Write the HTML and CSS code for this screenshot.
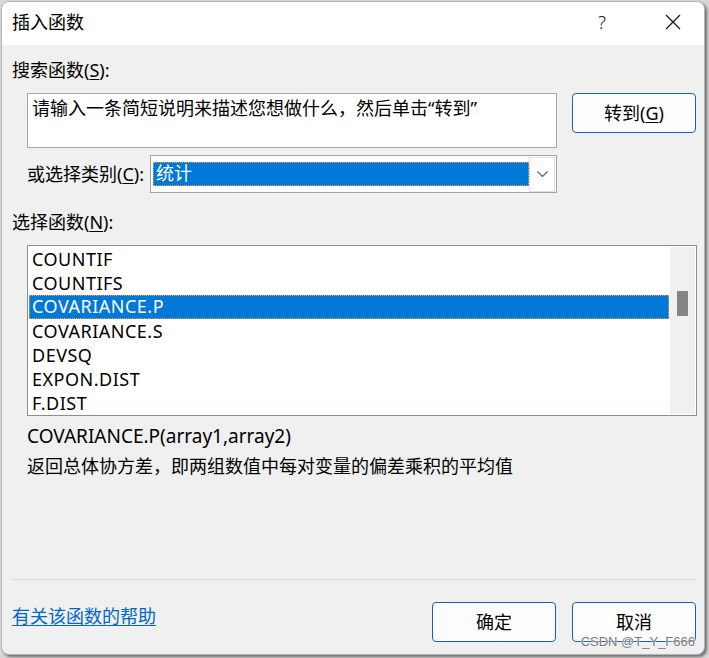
FILE: index.html
```html
<!DOCTYPE html>
<html lang="zh-CN">
<head>
<meta charset="utf-8">
<title>插入函数</title>
<link rel="stylesheet" href="styles.css">
</head>
<body>
<div class="window">
  <div class="titlebar">
    <span class="title">插入函数</span>
    <span class="tb-btn help">?</span>
    <span class="tb-btn close"><svg width="16" height="16" viewBox="0 0 16 16"><path d="M1 1 L15 15 M15 1 L1 15" stroke="#1a1a1a" stroke-width="1.3" fill="none"/></svg></span>
  </div>
  <div class="content">
    <div class="label l-search">搜索函数(<u>S</u>):</div>
    <div class="search-row">
      <div class="search-box">请输入一条简短说明来描述您想做什么，然后单击“转到”</div>
      <button class="btn">转到(<u>G</u>)</button>
    </div>
    <div class="cat-row">
      <span class="cat-label">或选择类别(<u>C</u>):</span>
      <div class="combo">
        <span class="combo-value">统计</span>
        <span class="combo-arrow"><svg width="11" height="6" viewBox="0 0 11 6"><polyline points="0.5,0.5 5.5,5.5 10.5,0.5" stroke="#5a5a5a" stroke-width="1.1" fill="none"/></svg></span>
      </div>
    </div>
    <div class="label l-func">选择函数(<u>N</u>):</div>
    <div class="listbox">
      <ul class="items">
        <li>COUNTIF</li>
        <li>COUNTIFS</li>
        <li class="sel">COVARIANCE.P</li>
        <li>COVARIANCE.S</li>
        <li>DEVSQ</li>
        <li>EXPON.DIST</li>
        <li>F.DIST</li>
      </ul>
      <div class="scrollbar"><div class="thumb"></div></div>
    </div>
    <div class="signature">COVARIANCE.P(array1,array2)</div>
    <div class="desc">返回总体协方差，即两组数值中每对变量的偏差乘积的平均值</div>
    <div class="separator"></div>
    <div class="footer">
      <a class="help-link" href="#">有关该函数的帮助</a>
      <div class="footer-btns">
        <button class="btn">确定</button>
        <button class="btn">取消</button>
      </div>
    </div>
  </div>
  <div class="watermark">CSDN @T_Y_F666</div>
</div>
</body>
</html>
```

FILE: styles.css
```css
html, body {
  margin: 0;
  padding: 0;
}
body {
  background: #d9d9d9;
  font-family: "Noto Sans", "Noto Sans CJK SC", sans-serif;
  font-size: 18px;
  color: #000;
  width: 709px;
  height: 658px;
  overflow: hidden;
}
.window {
  position: relative;
  margin: 1px 0 0 1px;
  width: 702px;
  height: 652px;
  border: 1px solid #b5b5b5;
  border-radius: 8px;
  background: #f0f0f0;
  box-shadow: 2px 2px 3px rgba(0, 0, 0, 0.5);
  overflow: hidden;
}
.titlebar {
  height: 43px;
  box-sizing: border-box;
  padding-bottom: 3px;
  background: #fff;
  display: flex;
  align-items: center;
}
.title {
  flex: 1;
  padding-left: 10px;
  line-height: 24px;
}
.tb-btn {
  width: 62px;
  height: 24px;
  display: flex;
  align-items: center;
  justify-content: center;
  color: #1a1a1a;
}
.help {
  margin-right: 9px;
  font-weight: 300;
  font-size: 19px;
}
.content {
  padding-left: 10px;
}
.label {
  line-height: 24px;
}
u {
  text-decoration-thickness: 1px;
  text-underline-offset: 2px;
}
.l-search {
  margin-top: 13px;
}
.search-row {
  display: flex;
  align-items: flex-start;
  gap: 15px;
  margin-top: 11px;
  margin-left: 15px;
}
.search-box {
  width: 530px;
  height: 55px;
  box-sizing: border-box;
  border: 1px solid #a8a8a8;
  background: #fff;
  padding: 2px 4px;
  line-height: 24px;
  white-space: nowrap;
}
.btn {
  width: 124px;
  height: 40px;
  box-sizing: border-box;
  border: 1px solid #1463b4;
  border-radius: 4px;
  background: #fdfdfd;
  font-family: inherit;
  font-size: 18px;
  color: #000;
  padding: 0;
  line-height: 24px;
}
.cat-row {
  display: flex;
  align-items: center;
  height: 38px;
  margin-top: 7px;
  margin-left: 15px;
}
.cat-label {
  width: 123px;
  line-height: 24px;
  white-space: nowrap;
}
.combo {
  width: 407px;
  height: 38px;
  box-sizing: border-box;
  border: 1px solid #a3a3a3;
  background: #fff;
  display: flex;
  align-items: center;
  padding: 0 1px 0 2px;
}
.combo-value {
  width: 376px;
  height: 24px;
  box-sizing: border-box;
  background: #0078d7;
  color: #fff;
  border: 1px dotted #f0a03c;
  line-height: 21px;
  padding-left: 2px;
}
.combo-arrow {
  width: 26px;
  height: 35px;
  box-sizing: border-box;
  border: 1px solid #e0e0e0;
  background: #fff;
  display: flex;
  align-items: center;
  justify-content: center;
}
.l-func {
  margin-top: 17px;
}
.listbox {
  margin-top: 11px;
  margin-left: 15px;
  width: 670px;
  height: 171px;
  box-sizing: border-box;
  border: 1px solid #8a8e96;
  background: #fff;
  padding: 1px;
  display: flex;
}
.items {
  list-style: none;
  margin: 0 1px 0 0;
  padding: 0;
  width: 640px;
  font-size: 18px;
  letter-spacing: 0.5px;
}
.items li {
  height: 24px;
  box-sizing: border-box;
  line-height: 24px;
  padding-left: 3px;
}
.items li.sel {
  background: #0078d7;
  color: #fff;
  border: 1px dotted #f0a03c;
  line-height: 21px;
  padding-left: 2px;
}
.scrollbar {
  position: relative;
  width: 25px;
  background: #f0f0f0;
}
.thumb {
  position: absolute;
  top: 44px;
  left: 7px;
  width: 11px;
  height: 25px;
  background: #858585;
}
.signature {
  margin-top: 8px;
  margin-left: 15px;
  line-height: 24px;
  font-size: 19px;
}
.desc {
  margin-top: 6px;
  margin-left: 15px;
  line-height: 24px;
}
.separator {
  margin-top: 101px;
  width: 685px;
  height: 1px;
  background: #dadada;
}
.footer {
  display: flex;
  justify-content: space-between;
  align-items: flex-start;
  margin-top: 22px;
  width: 684px;
}
.help-link {
  margin-top: 2px;
  line-height: 24px;
  color: #0066cc;
  text-decoration: underline;
  text-underline-offset: 2px;
}
.footer-btns {
  display: flex;
  gap: 16px;
}
.watermark {
  position: absolute;
  right: 9px;
  top: 632px;
  font-family: "Liberation Sans", Arial, sans-serif;
  font-size: 13px;
  line-height: 15px;
  color: #7a7a7a;
  text-shadow: 0 0 2px #fff, 0 0 1px #fff;
}
```
